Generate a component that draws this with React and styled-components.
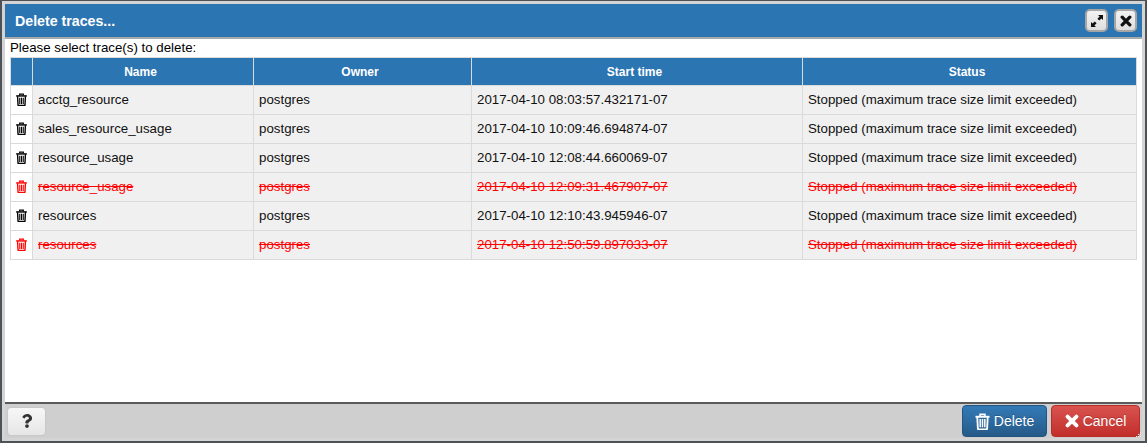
import React from "react";
import styled, { createGlobalStyle } from "styled-components";
import { FaQuestion } from "react-icons/fa";

const Global = createGlobalStyle`
  html, body { margin: 0; padding: 0; background: #4d5257; }
  body { font-family: "Liberation Sans", Arial, sans-serif; font-size: 13.3px; color: #000; }
`;

const Page = styled.div`
  width: 1147px;
  height: 443px;
  overflow: hidden;
  padding: 1px 2px 2px 2px;
  box-sizing: border-box;
`;

const Dialog = styled.div`
  height: 100%;
  box-sizing: border-box;
  border: 3px solid #d4d4d4;
  display: flex;
  flex-direction: column;
  background: #fff;
  position: relative;
`;

const Header = styled.div`
  height: 33px;
  flex: none;
  background: #2c75b3;
  border-bottom: 2px solid #a9a9a9;
  display: flex;
  align-items: center;
  justify-content: space-between;
  padding: 0 5px 0 10px;
`;

const Title = styled.div`
  color: #fff;
  font-size: 14.2px;
  font-weight: bold;
`;

const HeaderButtons = styled.div`
  display: flex;
  gap: 6px;
`;

const IconButton = styled.button`
  width: 23px;
  height: 23px;
  padding: 0;
  display: flex;
  align-items: center;
  justify-content: center;
  background: linear-gradient(#f3f3f3, #dedede);
  border: 2px solid #a6a6a6;
  border-radius: 5px;
  color: #111;
`;

const Body = styled.div`
  flex: 1;
  padding: 0 5px;
  overflow: hidden;
`;

const Note = styled.div`
  height: 18px;
  line-height: 18px;
`;

const Table = styled.table`
  width: 1127px;
  border-collapse: collapse;
  table-layout: fixed;
  th, td { border: 1px solid #dadada; }
`;

const HeadCell = styled.th`
  height: 28px;
  padding: 1px 5px 0 0;
  box-sizing: border-box;
  background: #2c75b3;
  color: #fff;
  font-size: 12px;
  font-weight: bold;
  text-align: center;
`;

const IconCell = styled.td`
  background: #fff;
  padding: 0 1px 2px 0;
  height: 29px;
  box-sizing: border-box;
  color: ${(p) => (p.$deleted ? "#ff0000" : "#000")};
  svg { display: block; margin: 0 auto; }
`;

const Cell = styled.td`
  background: #f0f0f0;
  padding: 0 4px 1px 5px;
  height: 29px;
  box-sizing: border-box;
  white-space: nowrap;
  color: ${(p) => (p.$deleted ? "#ff0000" : "#111")};
  text-decoration: ${(p) => (p.$deleted ? "line-through" : "none")};
`;

const Footer = styled.div`
  height: 34px;
  flex: none;
  background: #cfcfcf;
  border-top: 2px solid #5a5a5a;
  display: flex;
  align-items: center;
  justify-content: space-between;
  padding: 0 2px;
`;

const HelpButton = styled.button`
  width: 39px;
  height: 29px;
  padding: 0;
  display: flex;
  align-items: center;
  justify-content: center;
  background: linear-gradient(#f7f7f7, #e6e6e6);
  border: 1px solid #c8c8c8;
  border-radius: 4px;
  color: #333;
  font-size: 14px;
`;

const Actions = styled.div`
  display: flex;
  gap: 4px;
`;

const ActionButton = styled.button`
  width: ${(p) => p.$width}px;
  height: 32px;
  padding: 0;
  display: flex;
  align-items: center;
  justify-content: center;
  gap: 4px;
  border-radius: 4px;
  color: #fff;
  font-family: inherit;
  font-size: 14px;
  text-shadow: 0 -1px 0 rgba(0, 0, 0, 0.2);
  background: ${(p) => p.$bg};
  border: 1px solid ${(p) => p.$line};
`;

const Grip = styled.svg`
  position: absolute;
  right: 0;
  bottom: 0;
`;

// trash can with lid, handle and three stripes
function TrashIcon({ width = 11, height = 13 }) {
  return (
    <svg width={width} height={height} viewBox="0 0 12 14" fill="none" stroke="currentColor">
      <path d="M4 2.6V1.1h4v1.5" strokeWidth="1.3" />
      <path d="M.2 3.1h11.6" strokeWidth="1.6" />
      <path d="M1.7 3.4l.5 9.5c0 .4.3.6.6.6h6.4c.3 0 .6-.2.6-.6l.5-9.5" strokeWidth="1.5" />
      <path d="M4.1 5v6.8M6 5v6.8M7.9 5v6.8" strokeWidth="1.2" />
    </svg>
  );
}

function ExpandIcon() {
  return (
    <svg width="14" height="14" viewBox="0 0 14 14" fill="currentColor">
      <polygon points="8,1 13,1 13,6 11.4,4.4 9.2,6.6 7.4,4.8 9.6,2.6" />
      <polygon points="1,8 1,13 6,13 4.4,11.4 6.6,9.2 4.8,7.4 2.6,9.6" />
    </svg>
  );
}

// chunky cross, heavier than the icon packages' one
function CrossIcon({ size = 12 }) {
  return (
    <svg width={size} height={size} viewBox="0 0 12 12" stroke="currentColor" strokeWidth="3.3" strokeLinecap="round">
      <path d="M2.2 2.2l7.6 7.6M9.8 2.2l-7.6 7.6" />
    </svg>
  );
}

const rows = [
  ["acctg_resource", "2017-04-10 08:03:57.432171-07", false],
  ["sales_resource_usage", "2017-04-10 10:09:46.694874-07", false],
  ["resource_usage", "2017-04-10 12:08:44.660069-07", false],
  ["resource_usage", "2017-04-10 12:09:31.467907-07", true],
  ["resources", "2017-04-10 12:10:43.945946-07", false],
  ["resources", "2017-04-10 12:50:59.897033-07", true],
];

export default function App() {
  return (
    <Page>
      <Global />
      <Dialog>
        <Header>
          <Title>Delete traces...</Title>
          <HeaderButtons>
            <IconButton><ExpandIcon /></IconButton>
            <IconButton><CrossIcon size={12} /></IconButton>
          </HeaderButtons>
        </Header>
        <Body>
          <Note>Please select trace(s) to delete:</Note>
          <Table>
            <colgroup>
              <col style={{ width: 22 }} />
              <col style={{ width: 221 }} />
              <col style={{ width: 218 }} />
              <col style={{ width: 331 }} />
              <col />
            </colgroup>
            <thead>
              <tr>
                <HeadCell />
                <HeadCell>Name</HeadCell>
                <HeadCell>Owner</HeadCell>
                <HeadCell>Start time</HeadCell>
                <HeadCell>Status</HeadCell>
              </tr>
            </thead>
            <tbody>
              {rows.map(([name, start, deleted]) => (
                <tr key={start}>
                  <IconCell $deleted={deleted}><TrashIcon /></IconCell>
                  <Cell $deleted={deleted}>{name}</Cell>
                  <Cell $deleted={deleted}>postgres</Cell>
                  <Cell $deleted={deleted}>{start}</Cell>
                  <Cell $deleted={deleted}>Stopped (maximum trace size limit exceeded)</Cell>
                </tr>
              ))}
            </tbody>
          </Table>
        </Body>
        <Footer>
          <HelpButton><FaQuestion /></HelpButton>
          <Actions>
            <ActionButton $width={85} $bg="linear-gradient(#337ab7, #265a88)" $line="#245580">
              <TrashIcon width={15} height={17} /> Delete
            </ActionButton>
            <ActionButton $width={89} $bg="linear-gradient(#d9534f, #c12e2a)" $line="#b92c28">
              <CrossIcon size={14} /> Cancel
            </ActionButton>
          </Actions>
        </Footer>
        <Grip width="6" height="6" viewBox="0 0 6 6" fill="#f2f2f2">
          <rect x="4" y="0" width="1" height="1" />
          <rect x="2" y="2" width="1" height="1" />
          <rect x="4" y="2" width="1" height="1" />
          <rect x="0" y="4" width="1" height="1" />
          <rect x="2" y="4" width="1" height="1" />
          <rect x="4" y="4" width="1" height="1" />
        </Grip>
      </Dialog>
    </Page>
  );
}
